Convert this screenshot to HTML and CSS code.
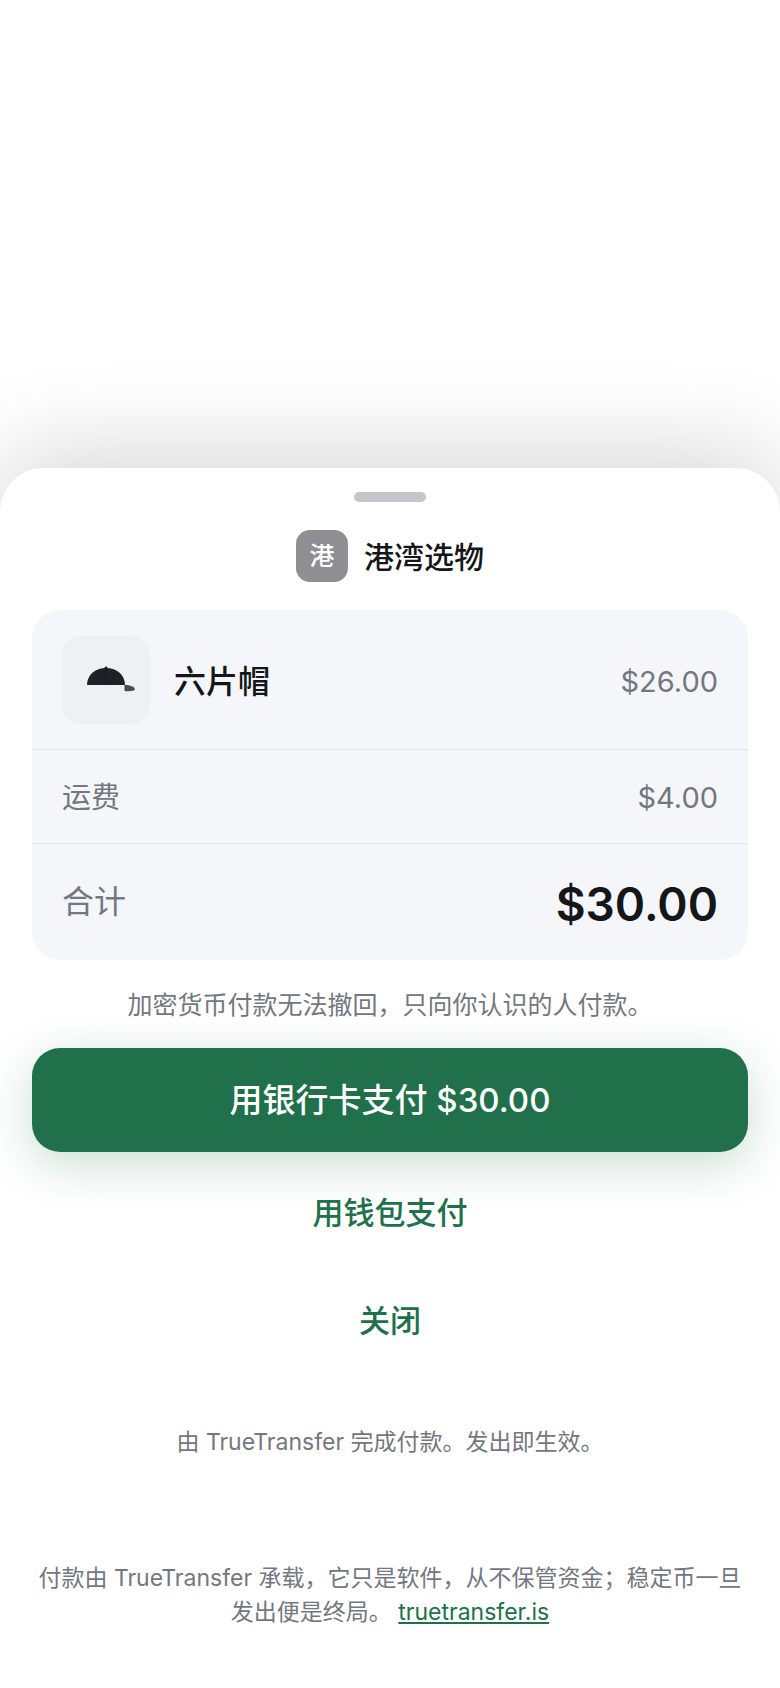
FILE: index.html
```html
<!DOCTYPE html>
<html lang="zh-CN">
<head>
  <meta charset="utf-8">
  <meta name="viewport" content="width=device-width, initial-scale=1">
  <title>港湾选物</title>
  <link rel="stylesheet" href="styles.css">
</head>
<body>
<main class="sheet">
  <div class="handle"></div>

  <header class="merchant">
    <span class="logo">港</span>
    <h1 class="name">港湾选物</h1>
  </header>

  <dl class="summary">
    <div class="row item">
      <dt class="product">
        <span class="thumb">
          <svg width="88" height="88" viewBox="0 0 88 88" aria-hidden="true">
            <path d="M62.500 49c6 0 10 1.500 10.500 4.500c-1 1.500-5 2-10.500 1.500z" fill="#4b4b50"/>
            <path d="M25 49c0-10 8-17 19-17s19 7 19 17z" fill="#202127"/>
            <path d="M44 32v17" stroke="#1b1c21" stroke-width="1"/>
            <circle cx="44" cy="32" r="1.500" fill="#17181d"/>
          </svg>
        </span>
        <span class="title">六片帽</span>
      </dt>
      <dd>$26.00</dd>
    </div>
    <div class="row">
      <dt>运费</dt>
      <dd>$4.00</dd>
    </div>
    <div class="row total">
      <dt>合计</dt>
      <dd>$30.00</dd>
    </div>
  </dl>

  <p class="warning">加密货币付款无法撤回，只向你认识的人付款。</p>

  <div class="actions">
    <button type="button" class="primary">用银行卡支付 $30.00</button>
    <button type="button" class="plain">用钱包支付</button>
    <button type="button" class="plain">关闭</button>
  </div>

  <p class="powered">由 TrueTransfer 完成付款。发出即生效。</p>

  <footer class="legal">
    付款由 TrueTransfer 承载，它只是软件，从不保管资金；稳定币一旦发出便是终局。 <a href="https://truetransfer.is">truetransfer.is</a>
  </footer>
</main>
</body>
</html>
```

FILE: styles.css
```css
*{
  box-sizing: border-box;
}
body{
  display: flex;
  flex-direction: column;
  justify-content: flex-end;
  min-height: 100vh;
  margin: 0;
  background: #fff;
  color: #15161a;
  font-family: Inter, "Noto Sans CJK SC", sans-serif;
  font-size: 29px;
  line-height: 44px;
}
h1, p, dl, dd{
  margin: 0;
}
.sheet{
  padding: 24px 32px 59px;
  border-radius: 44px 44px 0 0;
  background: #fff;
  box-shadow: 0 -16px 96px rgba(0, 0, 0, 0.16);
}
.handle{
  width: 72px;
  height: 10px;
  margin: 0 auto 28px;
  border-radius: 5px;
  background: #c4c6cb;
}

/* merchant */
.merchant{
  display: flex;
  align-items: center;
  justify-content: center;
  gap: 16px;
  margin-bottom: 28px;
}
.logo{
  display: flex;
  align-items: center;
  justify-content: center;
  width: 52px;
  height: 52px;
  border-radius: 14px;
  background: #8e8e93;
  color: #fff;
  font-size: 25px;
  font-weight: 500;
}
.name{
  padding-top: 2px;
  font-size: 30px;
  font-weight: 500;
}

/* order summary */
.summary{
  border-radius: 28px;
  background: #f4f6fa;
  color: #73777f;
}
.row{
  display: flex;
  align-items: center;
  justify-content: space-between;
  padding: 26px 30px 23px;
}
.row + .row{
  border-top: 1px solid #e2e4e9;
}
.item{
  padding: 26px 30px 25px;
}
.item dd, .title{
  padding-top: 3px;
}
.product{
  display: flex;
  align-items: center;
  gap: 24px;
  color: #15161a;
  font-size: 32px;
  font-weight: 500;
}
.thumb{
  width: 88px;
  height: 88px;
  border-radius: 18px;
  background: #eff0f3;
}
.thumb svg{
  display: block;
}
.total{
  padding: 32px 30px 28px;
  font-size: 32px;
}
.total dt{
  padding-bottom: 4px;
}
.total dd{
  color: #15161a;
  font-size: 46px;
  font-weight: 600;
  line-height: 56px;
}

.warning{
  padding: 25px 0 23px;
  color: #73777f;
  font-size: 25px;
  line-height: 40px;
  text-align: center;
}

/* buttons */
.actions{
  display: flex;
  flex-direction: column;
  gap: 12px;
}
button{
  padding: 0 16px 4px;
  border: none;
  border-radius: 28px;
  font-family: inherit;
  font-weight: 500;
  cursor: pointer;
}
.primary{
  height: 104px;
  background: #20704b;
  color: #fff;
  font-size: 33px;
  box-shadow: 0 12px 48px rgba(32, 112, 75, 0.24);
}
.plain{
  height: 96px;
  background: none;
  color: #20704b;
  font-size: 31px;
}

.powered{
  margin-top: 57px;
  color: #73777f;
  font-size: 23px;
  line-height: 34px;
  text-align: center;
}
.legal{
  margin-top: 102px;
  color: #73777f;
  font-size: 23px;
  line-height: 34px;
  text-align: center;
}
.legal a{
  color: #20704b;
}
```
